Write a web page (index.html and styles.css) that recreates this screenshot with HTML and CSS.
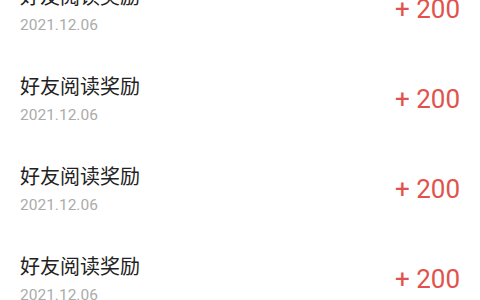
FILE: index.html
```html
<!DOCTYPE html>
<html lang="zh-CN">
<head>
<meta charset="utf-8">
<title>奖励记录</title>
<link rel="stylesheet" href="styles.css">
</head>
<body>
<ul class="list">
  <li class="row">
    <div class="info">
      <div class="title">好友阅读奖励</div>
      <div class="date">2021.12.06</div>
    </div>
    <div class="amount">+ 200</div>
  </li>
  <li class="row">
    <div class="info">
      <div class="title">好友阅读奖励</div>
      <div class="date">2021.12.06</div>
    </div>
    <div class="amount">+ 200</div>
  </li>
  <li class="row">
    <div class="info">
      <div class="title">好友阅读奖励</div>
      <div class="date">2021.12.06</div>
    </div>
    <div class="amount">+ 200</div>
  </li>
  <li class="row">
    <div class="info">
      <div class="title">好友阅读奖励</div>
      <div class="date">2021.12.06</div>
    </div>
    <div class="amount">+ 200</div>
  </li>
</ul>
</body>
</html>
```
FILE: styles.css
```css
html, body {
  margin: 0;
  padding: 0;
  background: #ffffff;
  overflow: hidden;
}
body {
  font-family: Roboto, "Noto Sans CJK SC", sans-serif;
}
.list {
  list-style: none;
  margin: -36px 0 0 0;
  padding: 0;
}
.row {
  height: 90px;
  padding: 0 20px;
  display: flex;
  align-items: center;
  justify-content: space-between;
}
.info {
  display: flex;
  flex-direction: column;
  gap: 6px;
}
.title {
  font-family: "Noto Sans CJK SC", sans-serif;
  font-size: 20px;
  line-height: 26px;
  color: #222222;
}
.date {
  font-family: Roboto, sans-serif;
  font-size: 15.5px;
  line-height: 20px;
  color: #ababab;
}
.amount {
  font-family: Roboto, sans-serif;
  font-size: 26px;
  color: #e2524c;
}
```
